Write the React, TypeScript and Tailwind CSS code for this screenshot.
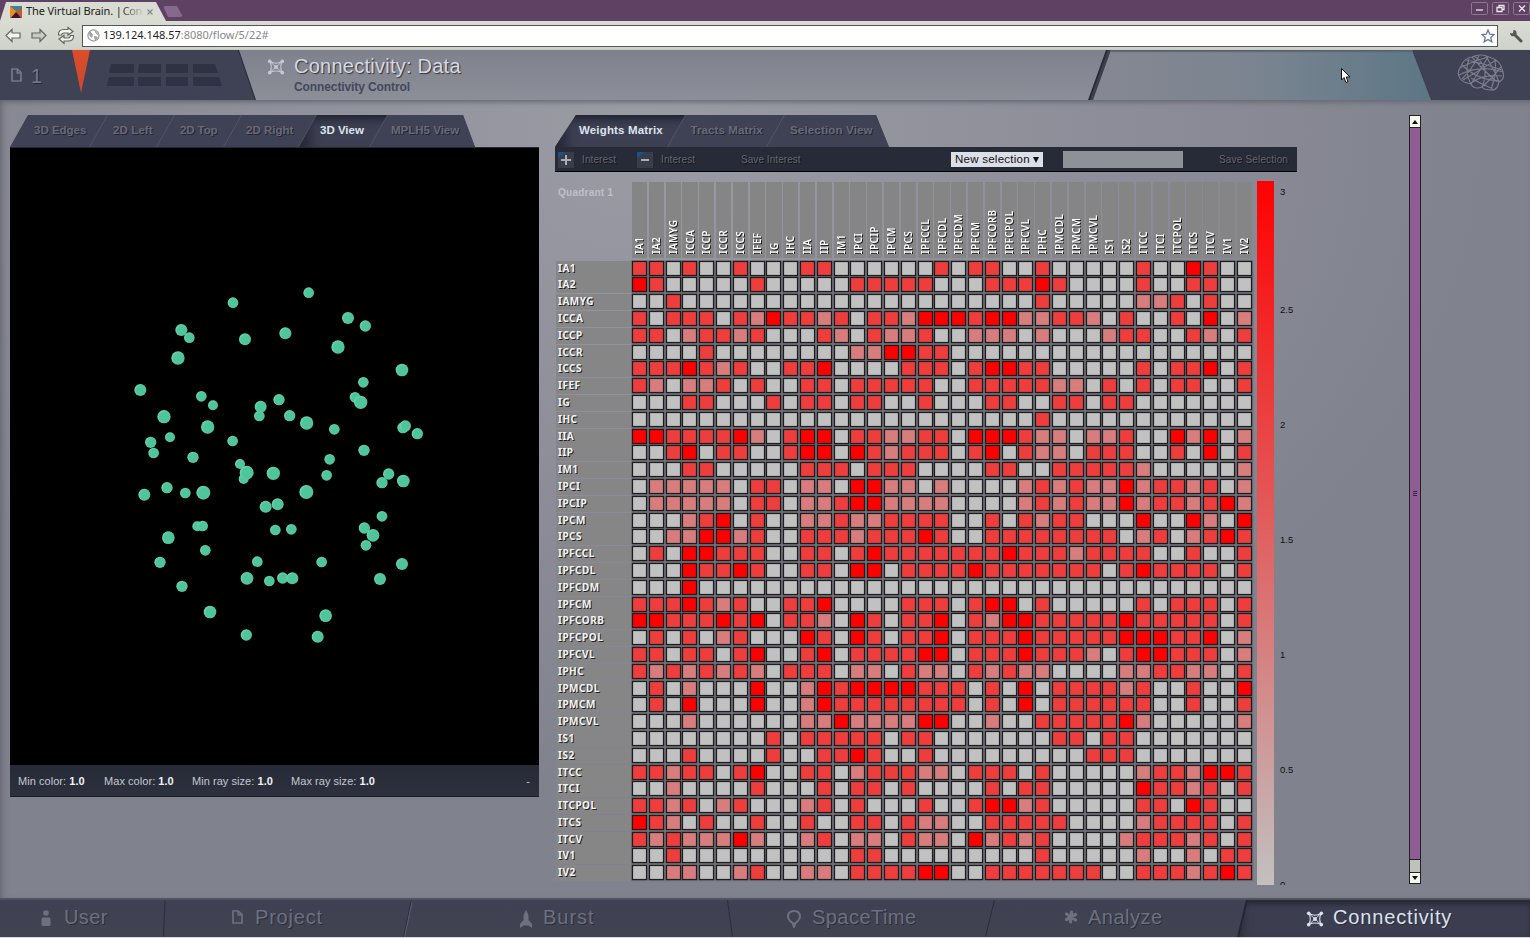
import React from "react";

const REGIONS = [
  "IA1", "IA2", "IAMYG", "ICCA", "ICCP", "ICCR", "ICCS", "IFEF", "IG", "IHC", "IIA", "IIP", "IM1",
  "IPCI", "IPCIP", "IPCM", "IPCS", "IPFCCL", "IPFCDL", "IPFCDM", "IPFCM", "IPFCORB", "IPFCPOL",
  "IPFCVL", "IPHC", "IPMCDL", "IPMCM", "IPMCVL", "IS1", "IS2", "ITCC", "ITCI", "ITCPOL", "ITCS",
  "ITCV", "IV1", "IV2",
];

// One string per region; each digit is the connection weight to the region of that column.
const WEIGHTS = [
  "2202002000220000" + "002022002000002003200",
  "3200000200000222" + "220002223200002002200",
  "0020000000000000" + "000000002000001120200",
  "2022202132212022" + "133323311221020020301",
  "2201221200021021" + "120011101000122002102",
  "0000200000000113" + "322000000000000000000",
  "2223212002230000" + "222023322000002022302",
  "2101120200220222" + "220022222110202022002",
  "0002200020220220" + "020002200220220000000",
  "0000000000000000" + "000000002000000000000",
  "3322223102330221" + "122033321101120031301",
  "0023022002330321" + "222023021102220020302",
  "0002200000222022" + "200002200222221000001",
  "0111110220110331" + "101000012121131221201",
  "0111110220112331" + "111000012121131221231",
  "0001230200112112" + "222002021220003003103",
  "0011331200222122" + "232002222222201201232",
  "0203322200220232" + "222222322212222002002",
  "0003223200220330" + "222232222222023222202",
  "0003000000000000" + "000000000000000000000",
  "2223212002230000" + "222023302000002022202",
  "3322232302210320" + "223021332222232222202",
  "0202012000320320" + "223022232222233322301",
  "2202202300230222" + "233022232221023322201",
  "2121212102220110" + "211021211000011221102",
  "0201000300132333" + "322202030222212002003",
  "0203000300132222" + "222202030222222002002",
  "0001000000113111" + "133001002222231000001",
  "0000000020222220" + "220000000220220000000",
  "0002000020022320" + "020000000002220000000",
  "2212202300220122" + "211022202000001221332",
  "0010000200020220" + "200002022000003221202",
  "2212012000120200" + "020023312000002203200",
  "3210200200200220" + "211002222200001222202",
  "2121113100120110" + "211031212000012221202",
  "0020000000000220" + "000000002000001001022",
  "0011001200110222" + "233002222222002221232",
];

const FILL = ["bg-[#c1c1c1]", "bg-[#d87d7d]", "bg-[#ee3d3d]", "bg-[#ff0000]"];

// x, y and radius of each node, in a 320 by 370 view at three times its size.
const NODES: number[][] = [
  [339, 68, 16], [566, 38, 16], [184, 150, 18], [208, 173, 16], [375, 178, 18], [496, 160, 18], [684, 114, 18],
  [736, 138, 17], [654, 201, 20], [174, 234, 20], [846, 270, 19], [730, 307, 16], [705, 352, 16], [722, 367, 20],
  [61, 330, 18], [244, 349, 16], [279, 376, 15], [477, 359, 17], [418, 408, 16], [422, 380, 18], [509, 407, 17],
  [132, 410, 20], [263, 441, 20], [560, 429, 20], [643, 448, 16], [849, 443, 17], [856, 438, 17], [892, 461, 17], [150, 472, 15],
  [92, 487, 17], [101, 519, 16], [338, 483, 16], [732, 511, 17], [219, 532, 17], [629, 538, 16], [360, 552, 15],
  [371, 597, 15], [380, 578, 21], [460, 580, 20], [620, 586, 16], [786, 608, 17], [806, 582, 17], [850, 603, 19], [141, 623, 17],
  [196, 639, 16], [250, 638, 21], [73, 644, 18], [559, 636, 21], [437, 680, 18], [473, 673, 18], [786, 709, 16],
  [232, 739, 15], [248, 738, 16], [466, 750, 16], [514, 748, 16], [733, 744, 17], [759, 766, 19], [738, 796, 16],
  [145, 773, 19], [256, 811, 16], [120, 847, 17], [412, 845, 16], [605, 846, 16], [846, 852, 18], [381, 895, 19],
  [448, 903, 16], [488, 894, 17], [517, 895, 18], [780, 897, 18], [186, 919, 17], [270, 996, 19], [617, 1007, 19],
  [379, 1065, 17], [593, 1070, 18],
];

const SANS = "font-['Liberation_Sans',sans-serif]";
const NOTO = "font-['Noto_Sans',sans-serif]";

function NodesIcon({ className }: { className?: string }) {
  return (
    <svg viewBox="0 0 18 17" className={className} fill="none" stroke="currentColor" strokeWidth="1.1">
      <path d="M3 3 Q9 6 15 3 Q13 8.500 15 14 Q9 11.500 3 14 Q5 8.500 3 3Z" />
      <path d="M3 3 L15 14 M15 3 L3 14" strokeWidth="0.900" />
      <g fill="currentColor" stroke="none">
        <circle cx="2.300" cy="2.500" r="1.900" />
        <circle cx="15.700" cy="2.500" r="1.900" />
        <circle cx="2.300" cy="14.500" r="1.900" />
        <circle cx="15.700" cy="14.500" r="1.900" />
        <circle cx="9" cy="8.500" r="2.100" />
      </g>
    </svg>
  );
}

function PageIcon({ className }: { className?: string }) {
  return (
    <svg viewBox="0 0 11 14" className={className} fill="none" stroke="currentColor" strokeWidth="1.700">
      <path d="M1 1 H6.500 L10 4.500 V13 H1Z M6.300 1 V5 H10" />
    </svg>
  );
}

function BrowserChrome() {
  return (
    <div className={NOTO}>
      <div className="flex h-[21px] items-end bg-[#5f4263]">
        <div className="flex h-[19px] w-[166px] items-center bg-[#d9dcd2] pl-[10px] text-[11px] text-[#222] [clip-path:polygon(6px_0,156px_0,100%_100%,0_100%)]">
          <svg viewBox="0 0 12 12" className="mr-[4px] size-[12px]">
            <rect width="12" height="12" fill="#3f8293" />
            <path d="M0 0 L7 6 L0 12Z" fill="#f08c1e" />
            <path d="M12 2 V12 H7 L6 6Z" fill="#c9572c" />
            <path d="M1 12 L6 6 L11 12Z" fill="#3a1730" />
          </svg>
          <span className="whitespace-nowrap tracking-[-0.1px]">The Virtual Brain. | </span>
          <span className="ml-[1px] bg-gradient-to-r from-[#333] to-[#c4c7be] bg-clip-text tracking-[-0.4px] text-transparent">Con</span>
          <svg viewBox="0 0 6 6" className="ml-[5px] size-[6px]" stroke="#888" strokeWidth="1.200">
            <path d="M0.500 0.500 L5.500 5.500 M5.500 0.500 L0.500 5.500" />
          </svg>
        </div>
        <div className="-ml-[3px] mb-[4px] h-[11px] w-[20px] rounded-[3px] bg-[#86698c] [clip-path:polygon(0_0,14px_0,100%_100%,5px_100%)]" />
        <div className="ml-auto flex h-full items-start gap-[4px] pt-[2px]">
          {["M5 8 H12", "M5 5.500 H10 V9.500 H5Z M7 5.500 V3.500 H12 V7.500 H10", "M6 3.500 L12 9.500 M12 3.500 L6 9.500"].map((d, i) => (
            <svg key={i} viewBox="0 0 17 13" className="h-[13px] w-[17px]" fill="none" stroke="#efe6f0" strokeWidth="1.300">
              <rect x="0.500" y="0.500" width="16" height="12" rx="1" stroke="#8d7791" strokeWidth="1" />
              <path d={d} />
            </svg>
          ))}
        </div>
      </div>
      <div className="flex h-[29px] items-center bg-gradient-to-b from-[#d9dcd2] to-[#cfd2c9] pl-[5px]">
        <svg viewBox="0 0 74 22" className="mr-[3px] h-[22px] w-[74px]" fill="#f4f4f0" stroke="#666" strokeWidth="1.200">
          <path d="M1 10.500 L7 4.500 V8 H15 V13 H7 V16.500Z" />
          <path d="M41 10.500 L35 4.500 V8 H27 V13 H35 V16.500Z" fill="#c8cbc4" />
          <path d="M53.500 10 Q53 4.500 59 4.500 H63 V2.500 L68 6.500 L63 10 V8 H59 Q57 8 56.500 10Z" />
          <path d="M68.500 10.500 Q69 16 63 16 H59 V18.500 L54 14 L59 10.500 V13 H63 Q65 13 65.500 10.500Z" />
        </svg>
        <div className="flex h-[22px] w-[1416px] items-center border border-[#555] bg-white pl-[4px] text-[11px] tracking-[-0.02px] text-[#222]">
          <svg viewBox="0 0 14 14" className="mr-[3px] size-[13px]" fill="none" stroke="#999">
            <circle cx="7" cy="7" r="6" strokeWidth="1.300" />
            <path d="M3 3 L6 6 L5 9 L3 7Z M9 2 L10 5 L12 6 M8 8 L11 9 L9 12Z" fill="#aaa" />
          </svg>
          <span>139.124.148.57</span>
          <span className="text-[#888]">:8080/flow/5/22#</span>
          <svg viewBox="0 0 14 14" className="mr-[2px] ml-auto size-[14px]" fill="#fff" stroke="#65779a" strokeWidth="1.300">
            <path d="M7 1 L8.800 5.200 L13 5.500 L9.800 8.400 L10.800 12.800 L7 10.400 L3.200 12.800 L4.200 8.400 L1 5.500 L5.200 5.200Z" />
          </svg>
        </div>
        <svg viewBox="0 0 14 14" className="ml-[11px] size-[14px]">
          <path d="M5 5 L12 12" stroke="#555" strokeWidth="3" strokeLinecap="round" />
          <path d="M1 4 L4 4.500 L4.500 1 Q8 1 7.500 5 Q6 8 2.500 7 Q1 6 1 4Z" fill="#555" />
        </svg>
      </div>
    </div>
  );
}

function Header() {
  return (
    <div className="flex h-[50px] bg-[#3f4154] shadow-[0_1px_2px_#5b5d69]">
      <div className="flex w-[238px] shrink-0">
        <PageIcon className="mt-[18px] ml-[11px] h-[14px] w-[11px] text-[#757786]" />
        <span className={`${SANS} mt-[14px] ml-[9px] w-[12px] text-[20px] leading-[24px] text-[#757786] [text-shadow:1px_1px_0_#262838]`}>1</span>
        <div className="ml-[29px] h-[43px] w-[18px] bg-gradient-to-b from-[#dc4d2a] to-[#c74a2b] [clip-path:polygon(0_0,100%_0,50%_100%)]" />
        <svg viewBox="0 0 115 22" className="mt-[14px] ml-[17px] h-[22px] w-[115px]" fill="#2f3242">
          <path d="M4 0H27V9H2Z M32 0H54V9H31Z M59 0H81V9H59Z M86 0H108L111 9H86Z" />
          <path d="M2 13H27V22H0Z M31 13H54V22H31Z M59 13H81V22H59Z M86 13H112L115 22H86Z" />
        </svg>
      </div>
      <div className="w-[870px] shrink-0 bg-[#262938] [clip-path:polygon(0_0,100%_0,852px_100%,17px_100%)]">
        <div className={`${SANS} flex h-full bg-gradient-to-b from-[#7f818c] to-[#8c8e98] [clip-path:polygon(1px_0,868px_0,850px_100%,18px_100%)]`}>
          <NodesIcon className="mt-[9px] ml-[29px] h-[16px] w-[18px] text-[#c6cad6]" />
          <div className="mt-[4px] ml-[9px]">
            <div className="text-[20px] leading-[24px] tracking-[0.25px] text-[#d5d9e4] [text-shadow:1px_1px_1px_#333]">Connectivity: Data</div>
            <div className="mt-[2px] text-[12px] leading-[15px] font-bold tracking-[-0.1px] text-[#45485c]">Connectivity Control</div>
          </div>
        </div>
      </div>
      <div className="-ml-[18px] w-[342px] shrink-0 bg-[#3c3f4c] [clip-path:polygon(18px_0,323px_0,100%_100%,0_100%)]">
        <div className="h-full bg-[linear-gradient(90deg,#868892,#7a8490_50%,#5c7686)] pt-[18px] pl-[251px] shadow-[inset_0_2px_1px_#5b6470] [clip-path:polygon(21px_0,322px_0,341px_100%,3px_100%)]">
          <svg viewBox="0 0 10 16" className="h-[16px] w-[10px]">
            <path d="M0.500 0.500 V12 L3 9.500 L5 14.500 L7 13.500 L5.200 9 H9Z" fill="#fff" stroke="#111" />
          </svg>
        </div>
      </div>
      <svg viewBox="0 0 48 38" className="mt-[4px] ml-[25px] h-[38px] w-[48px]" fill="none" stroke="#7b7d8b" strokeWidth="1.2">
        <path d="M3 14 Q7 4 15 3 Q24 -1 32 3 Q44 6 46 18 Q48 25 42 28 Q40 37 34 36 Q27 36 25 33 Q17 36 14 30 Q3 28 2 22 Q0 18 3 14Z" />
        <path d="M3 14 Q14 8 31 3 M9 6 Q22 8 45 16 M15 3 Q24 14 40 28 M6 26 Q22 17 39 6 M2 21 Q24 10 46 18 M12 5 Q7 18 14 30 M22 2 Q14 16 5 25 M31 3 Q22 18 14 30 M38 5 Q40 18 34 36 M5 11 Q20 26 43 27 M17 2 Q34 12 25 33 M29 2 Q38 18 42 28 M14 29 Q26 20 45 22 M25 33 Q34 25 44 13 M14 24 Q24 30 36 35" />
      </svg>
    </div>
  );
}

function Tab({ label, className, active }: { label: string; className: string; active?: boolean }) {
  return (
    <div
      className={`${SANS} -mr-[17px] h-full shrink-0 pt-[7px] text-[11.500px] leading-[16px] font-bold whitespace-nowrap [clip-path:polygon(18px_0,100%_0,calc(100%-18px)_100%,0_100%)] ${
        active
          ? "bg-[#3d4052] text-[#dde3ee] shadow-[inset_0_7px_8px_-3px_#1f212e,inset_18px_0_10px_-6px_#292b3a]"
          : "bg-[#3f4154] text-[#6a6a74] [text-shadow:1px_1px_0_#23253a]"
      } ${className}`}
    >
      {label}
    </div>
  );
}

function ViewerPanel() {
  return (
    <div className="mt-[15px] ml-[10px] w-[529px]">
      <div className="flex h-[32px] w-[465px] bg-[#535566] [clip-path:polygon(18px_0,453px_0,465px_100%,0_100%)]">
        <Tab label="3D Edges" className="w-[97px] pl-[24px]" />
        <Tab label="2D Left" className="w-[84px] pl-[23px] tracking-[0.1px]" />
        <Tab label="2D Top" className="w-[84px] pl-[23px] tracking-[-0.1px]" />
        <Tab label="2D Right" className="w-[92px] pl-[22px]" />
        <Tab label="3D View" className="w-[88px] pl-[21px]" active />
        <Tab label="MPLH5 View" className="w-[140px] pl-[21px]" />
      </div>
      <div className="h-[618px] border-t border-[#252734] bg-black">
        <svg viewBox="-330 -396 1587 1854" className="h-[618px] w-[529px]">
          <defs>
            <radialGradient id="node" cx="0.580" cy="0.550" r="0.550">
              <stop offset="0.700" stopColor="#50c59b" />
              <stop offset="1" stopColor="#67d5ac" />
            </radialGradient>
          </defs>
          {NODES.map(([x, y, r], i) => (
            <circle key={i} cx={x} cy={y} r={r} fill="url(#node)" />
          ))}
        </svg>
      </div>
      <div className={`${SANS} flex h-[32px] items-center border-b border-[#1a1c26] bg-gradient-to-b from-[#262a36] to-[#2d313e] pt-[2px] pl-[8px] text-[11px] tracking-[0.05px] text-[#c3c7d1]`}>
        <span className="w-[86px]">Min color: <b className="text-[#eef1f6]">1.0</b></span>
        <span className="w-[88px]">Max color: <b className="text-[#eef1f6]">1.0</b></span>
        <span className="w-[99px]">Min ray size: <b className="text-[#eef1f6]">1.0</b></span>
        <span>Max ray size: <b className="text-[#eef1f6]">1.0</b></span>
        <span className="mr-[9px] ml-auto">-</span>
      </div>
    </div>
  );
}

function Toggle({ minus }: { minus?: boolean }) {
  return (
    <svg viewBox="0 0 16 16" className="size-[16px] shrink-0">
      <rect width="16" height="16" fill="#393d4a" />
      <path d="M0 0H8L0 6Z" fill="#1e4f86" />
      <path d={minus ? "M4 8H12" : "M3 8H13 M8 3V13"} stroke="#a9adb6" strokeWidth="2" />
    </svg>
  );
}

function MatrixPanel() {
  const dim = "text-[#656771] [text-shadow:1px_1px_0_#12141b]";
  return (
    <div className="mt-[15px] ml-[16px] w-[742px]">
      <div className="flex h-[32px] w-[334px] bg-[#535566] [clip-path:polygon(21px_0,321px_0,334px_100%,0_100%)]">
        <Tab label="Weights Matrix" className="w-[130px] pl-[24px] tracking-[0.16px]" active />
        <Tab label="Tracts Matrix" className="w-[116px] pl-[22.500px] tracking-[0.1px]" />
        <Tab label="Selection View" className="w-[150px] pl-[23px] tracking-[0.17px]" />
      </div>
      <div className={`${SANS} flex h-[25px] items-center border-b border-black bg-[#272b37] pt-px pl-[3px] text-[10px]`}>
        <Toggle />
        <span className={`ml-[8px] w-[55px] ${dim} tracking-[0.1px]`}>Interest</span>
        <Toggle minus />
        <span className={`ml-[8px] w-[80px] ${dim} tracking-[0.1px]`}>Interest</span>
        <span className={`w-[210px] ${dim} tracking-[0.06px]`}>Save Interest</span>
        <div className="mb-px flex h-[15px] w-[92px] items-center bg-[#dcdfe6] pt-px pl-[4px] text-[11.500px] tracking-[0.25px] whitespace-nowrap text-[#111]">
          New selection
          <svg viewBox="0 0 6 6" className="ml-[3px] size-[6px] shrink-0"><path d="M0 0H6L3 6Z" fill="#111" /></svg>
        </div>
        <div className="mb-px ml-[20px] h-[17px] w-[120px] bg-[#8f9198]" />
        <span className={`ml-[36px] ${dim} tracking-[0.17px] whitespace-nowrap`}>Save Selection</span>
      </div>
      <div className="mt-[9px] flex h-[704px]">
        <div className="w-[702px] pt-[1px]">
          <div className="flex h-[78px] pl-[77px]">
            <div className={`${SANS} -ml-[77px] w-[77px] pt-[4px] pl-[3px] text-[10px] leading-[14px] font-bold tracking-[0.25px] text-[#c0c0c4]`}>Quadrant 1</div>
            <div className={`${NOTO} grid w-[621.600px] shrink-0 grid-cols-[repeat(37,16.800px)] text-[10px] leading-[15px] font-semibold text-white`}>
              {REGIONS.map((name) => (
                <div key={name} className="mr-[1.500px] flex h-[76px] items-center bg-[#858585] pb-[4px] [writing-mode:vertical-rl]">
                  <span className="h-full rotate-180 tracking-[0.300px] [text-shadow:-1px_1px_0_#222]">{name}</span>
                </div>
              ))}
            </div>
          </div>
          <div className="grid grid-rows-[repeat(37,16.800px)] pt-[0.600px]">
            {WEIGHTS.map((row, r) => (
              <div key={r} className="flex">
                <div className={`${NOTO} mr-[1px] ml-[1px] h-[16px] w-[75px] bg-[#868686] pl-[2px] text-[10px] leading-[15px] font-bold tracking-[0.5px] text-[#f4f4f4] [text-shadow:1px_1px_0_#222]`}>
                  {REGIONS[r]}
                </div>
                <div className="grid h-[16.800px] w-[621.600px] grid-cols-[repeat(37,16.800px)] bg-[#7d7f88]">
                  {row.split("").map((v, c) => (
                    <div key={c} className={`h-[15px] w-[15px] border border-[#1d1d1d] shadow-[0_0_0_0.500px_#4a4a4e,inset_0_0_1px_#1a1a1a] ${FILL[Number(v)]}`} />
                  ))}
                </div>
              </div>
            ))}
          </div>
        </div>
        <div className="h-[704px] w-[17px] bg-[linear-gradient(180deg,#ff0000,#c2c0c0)]" />
        <div className={`${SANS} flex h-[704px] flex-col overflow-hidden pt-[5px] pl-[6px] text-[9.500px] leading-[12px] text-[#111]`}>
          <span className="mb-[106px]">3</span>
          <span className="mb-[103px]">2.5</span>
          <span className="mb-[103px]">2</span>
          <span className="mb-[103px]">1.5</span>
          <span className="mb-[103px]">1</span>
          <span className="mb-[103px]">0.5</span>
          <span>0</span>
        </div>
      </div>
    </div>
  );
}

function Scrollbar() {
  return (
    <div className="mt-[15px] ml-[112px] flex h-[769px] w-[12px] flex-col border border-[#222] bg-[#bfc2bb]">
      <div className="flex h-[11px] items-center justify-center bg-[#f4f8ec]">
        <svg viewBox="0 0 6 4" className="h-[4px] w-[6px]"><path d="M0 4L3 0L6 4Z" fill="#111" /></svg>
      </div>
      <div className="flex h-[733px] flex-col items-center justify-center gap-[1px] border-y border-[#222] bg-[#8f5c94]">
        <div className="h-px w-[4px] bg-[#3c2440]" />
        <div className="h-px w-[4px] bg-[#3c2440]" />
        <div className="h-px w-[4px] bg-[#3c2440]" />
      </div>
      <div className="mt-auto flex h-[11px] items-center justify-center border-t border-[#222] bg-[#f4f8ec]">
        <svg viewBox="0 0 6 4" className="h-[4px] w-[6px]"><path d="M0 0L3 4L6 0Z" fill="#111" /></svg>
      </div>
    </div>
  );
}

function Footer() {
  const item = "flex shrink-0 items-start pt-[5px] text-[20px] leading-[24px] text-[#6e707d] [text-shadow:1px_1px_0_#2b2d3c]";
  return (
    <div className={`${SANS} flex h-[39px] border-t-2 border-[#51535f] bg-gradient-to-b from-[#3f4154] to-[#41434f]`}>
      <div className={`${item} w-[163px] pl-[41px] tracking-[0.4px]`}>
        <svg viewBox="0 0 10 16" className="mt-[5px] mr-[13px] h-[16px] w-[10px] shrink-0" fill="currentColor">
          <circle cx="5" cy="3" r="2.800" />
          <rect x="0.500" y="7.500" width="9" height="8.500" rx="1.500" />
        </svg>
        User
      </div>
      <svg viewBox="0 0 3 37" className="h-[37px] w-[3px]" stroke="#2b2d3b"><path d="M2 0L0.500 37" /></svg>
      <div className={`${item} w-[237px] pl-[66px] tracking-[0.8px]`}>
        <PageIcon className="mt-[5px] mr-[12px] h-[14px] w-[11px] shrink-0" />
        Project
      </div>
      <svg viewBox="0 0 9 37" className="h-[37px] w-[9px]" stroke="#2b2d3b"><path d="M8.500 0L0.500 37" /><path d="M9.500 0L1.500 37" stroke="#5d5f6e" /></svg>
      <div className={`${item} w-[315px] pl-[108px] tracking-[1px]`}>
        <svg viewBox="0 0 12 18" className="mt-[5px] mr-[11px] h-[18px] w-[12px] shrink-0" fill="currentColor">
          <path d="M6 0 Q9 4 8.500 10 L12 14 V18 L8.500 15.500 H3.500 L0 18 V14 L3.500 10 Q3 4 6 0Z" />
        </svg>
        Burst
      </div>
      <svg viewBox="0 0 6 37" className="h-[37px] w-[6px]" stroke="#2b2d3b"><path d="M0.500 0L5.500 37" /></svg>
      <div className={`${item} w-[252px] pl-[54px] tracking-[0.45px]`}>
        <svg viewBox="0 0 14 18" className="mt-[5px] mr-[11px] h-[18px] w-[14px] shrink-0" fill="none" stroke="currentColor" strokeWidth="2">
          <path d="M7 1 Q13 1 13 6.500 Q13 9.500 8.500 13 L7 17 L5.500 13 Q1 9.500 1 6.500 Q1 1 7 1Z" />
          <path d="M5 12.500H9L7 17.500Z" fill="currentColor" stroke="none" />
        </svg>
        SpaceTime
      </div>
      <svg viewBox="0 0 10 37" className="h-[37px] w-[10px]" stroke="#2b2d3b"><path d="M9.500 0L0.500 37" /></svg>
      <div className={`${item} w-[242px] pl-[69px] tracking-[0.5px]`}>
        <svg viewBox="0 0 14 14" className="mt-[5px] mr-[10px] size-[14px] shrink-0" stroke="currentColor" strokeWidth="3.200" strokeLinecap="round">
          <path d="M7.500 2L6.500 12 M2.500 4L11.500 10 M11.500 4.500L2.500 9.500" />
        </svg>
        Analyze
      </div>
      <div className="w-[293px] shrink-0 bg-[#232533] [clip-path:polygon(9px_0,100%_0,100%_100%,0_100%)]">
        <div className={`${item} h-full w-full bg-[#3c3e50] pl-[69px] tracking-[0.85px] !text-[#dbe2ee] shadow-[inset_0_5px_5px_-1px_#262837,inset_12px_0_10px_-6px_#2a2c3b] [clip-path:polygon(11px_0,100%_0,100%_100%,2px_100%)]`}>
          <NodesIcon className="mt-[6px] mr-[9px] h-[16px] w-[18px] shrink-0" />
          Connectivity
        </div>
      </div>
    </div>
  );
}

export default function App() {
  return (
    <div className="h-[938px] w-[1530px] overflow-hidden bg-[#d8d8dc]">
      <BrowserChrome />
      <Header />
      <div className="flex h-[798px] bg-[radial-gradient(ellipse_850px_650px_at_42%_4%,#9b9ba4,#8b8c97_60%,#80828e)] shadow-[inset_0_5px_5px_-3px_#666874,inset_5px_0_6px_-3px_#666874]">
        <ViewerPanel />
        <MatrixPanel />
        <Scrollbar />
      </div>
      <Footer />
    </div>
  );
}
